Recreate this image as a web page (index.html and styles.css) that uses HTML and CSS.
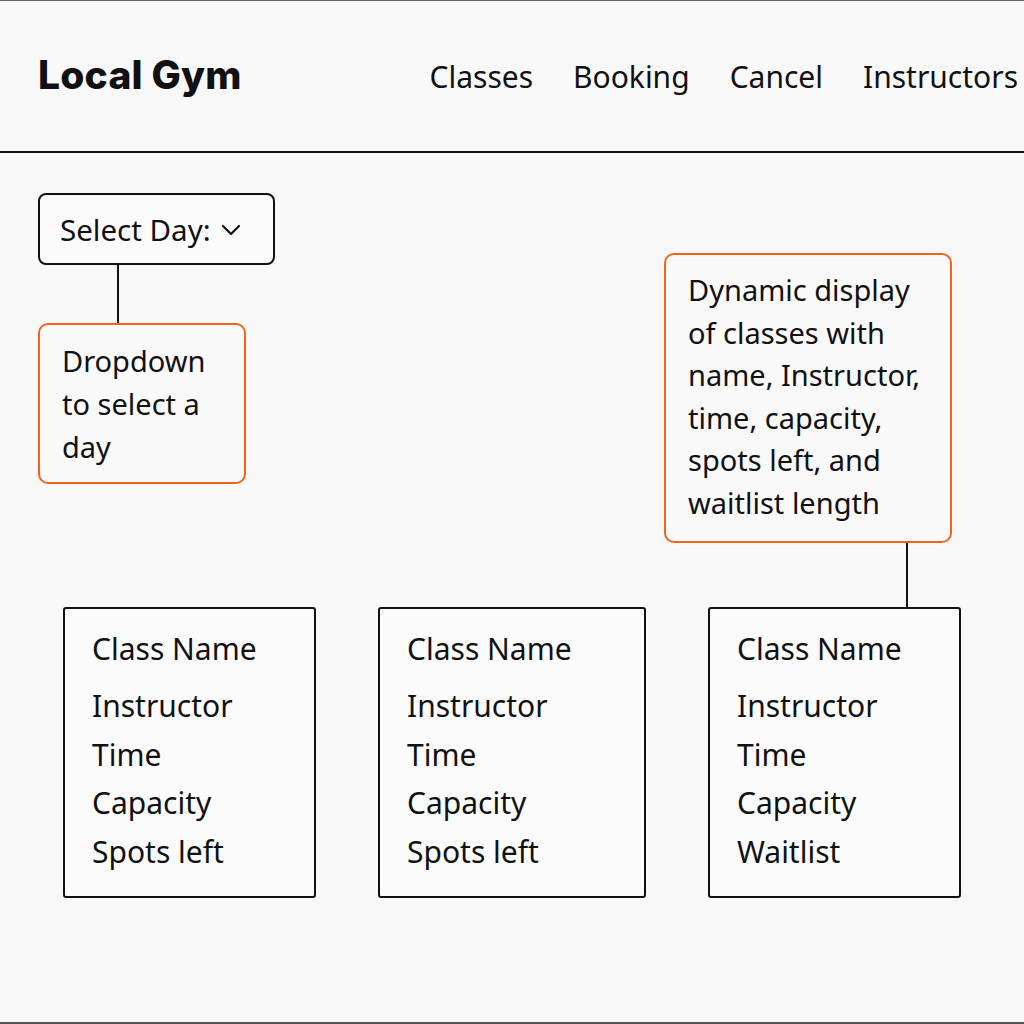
FILE: index.html
```html
<!DOCTYPE html>
<html lang="en">
<head>
<meta charset="utf-8">
<title>Local Gym</title>
<link rel="stylesheet" href="styles.css">
</head>
<body>
<div class="page">
  <header class="header">
    <div class="brand">Local Gym</div>
    <nav class="nav">
      <span class="nav-item">Classes</span>
      <span class="nav-item">Booking</span>
      <span class="nav-item">Cancel</span>
      <span class="nav-item">Instructors</span>
    </nav>
  </header>
  <main class="main">
    <div class="top">
      <div class="left-col">
        <div class="select">
          <span>Select Day:</span>
          <svg class="chev" width="20" height="12" viewBox="0 0 20 12"><path d="M2 2 L10 10 L18 2" fill="none" stroke="#111" stroke-width="2.2" stroke-linecap="round" stroke-linejoin="round"/></svg>
        </div>
        <div class="vline vline-left"></div>
        <div class="note note-left">Dropdown to select a day</div>
      </div>
      <div class="right-col">
        <div class="note note-right">Dynamic display of classes with name, Instructor, time, capacity, spots left, and waitlist length</div>
        <div class="vline vline-right"></div>
      </div>
    </div>
    <div class="cards">
      <div class="card card-a">
        <div class="card-title">Class Name</div>
        <div class="card-row">Instructor</div>
        <div class="card-row">Time</div>
        <div class="card-row">Capacity</div>
        <div class="card-row">Spots left</div>
      </div>
      <div class="card card-b">
        <div class="card-title">Class Name</div>
        <div class="card-row">Instructor</div>
        <div class="card-row">Time</div>
        <div class="card-row">Capacity</div>
        <div class="card-row">Spots left</div>
      </div>
      <div class="card card-c">
        <div class="card-title">Class Name</div>
        <div class="card-row">Instructor</div>
        <div class="card-row">Time</div>
        <div class="card-row">Capacity</div>
        <div class="card-row">Waitlist</div>
      </div>
    </div>
  </main>
</div>
</body>
</html>
```
FILE: styles.css
```css
* { box-sizing: border-box; }
html, body { margin: 0; padding: 0; }
body {
  background: #f8f8f8;
  font-family: "Noto Sans", "Open Sans", sans-serif;
  color: #111;
}
.page {
  width: 1024px;
  height: 1024px;
  border-top: 1px solid #666;
  border-bottom: 2px solid #555;
  overflow: hidden;
}
.header {
  height: 152px;
  border-bottom: 2px solid #111;
  display: flex;
  align-items: center;
  padding: 0 0 0 38px;
}
.brand {
  font-family: Inter, "Liberation Sans", sans-serif;
  font-weight: 800;
  font-size: 39px;
  letter-spacing: 0.2px;
  margin-top: -4px;
}
.nav {
  margin-left: auto;
  display: flex;
  gap: 40px;
  margin-right: 6px;
}
.nav-item {
  font-size: 30px;
}
.main {
  padding-top: 40px;
}
.top {
  display: flex;
  justify-content: space-between;
}
.left-col {
  margin-left: 38px;
  display: flex;
  flex-direction: column;
}
.select {
  width: 237px;
  height: 72px;
  border: 2px solid #111;
  border-radius: 8px;
  background: #fbfbfb;
  display: flex;
  align-items: center;
  padding-left: 20px;
  font-size: 29.5px;
}
.chev { margin-left: 10px; margin-top: 2px; }
.vline {
  width: 2px;
  background: #111;
}
.vline-left { height: 58px; margin-left: 79px; }
.vline-right { height: 64px; margin-left: 242px; }
.note {
  border: 2px solid #f0641e;
  border-radius: 10px;
  background: #f9f9f9;
  font-size: 29px;
  line-height: 43px;
}
.note-left {
  width: 208px;
  height: 161px;
  padding: 14px 20px 0 22px;
}
.right-col {
  margin-top: 60px;
  margin-right: 72px;
  display: flex;
  flex-direction: column;
}
.note-right {
  width: 288px;
  height: 290px;
  padding: 14px 12px 0 22px;
  line-height: 42.6px;
}
.cards {
  display: flex;
  gap: 62px;
  padding-left: 63px;
}
.card {
  height: 291px;
  border: 2px solid #111;
  border-radius: 3px;
  background: #fbfbfb;
  padding: 17px 0 0 27px;
  font-size: 30px;
}
.card-a { width: 253px; }
.card-b { width: 268px; }
.card-c { width: 253px; }
.card-title { line-height: 46px; margin-bottom: 10px; }
.card-row { line-height: 48.7px; }
```
